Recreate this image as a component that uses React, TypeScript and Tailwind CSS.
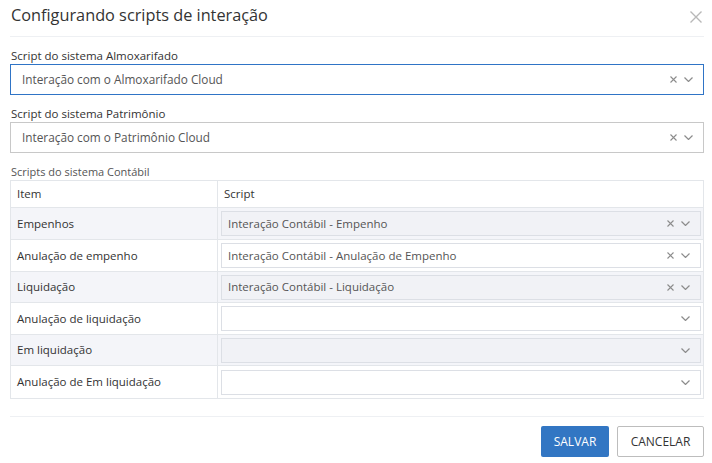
type Row = { item: string; value?: string; striped: boolean; h: string }

const rows: Row[] = [
  { item: 'Empenhos', value: 'Interação Contábil - Empenho', striped: true, h: 'h-[32px]' },
  { item: 'Anulação de empenho', value: 'Interação Contábil - Anulação de Empenho', striped: false, h: 'h-[32px]' },
  { item: 'Liquidação', value: 'Interação Contábil - Liquidação', striped: true, h: 'h-[31px]' },
  { item: 'Anulação de liquidação', striped: false, h: 'h-[32px]' },
  { item: 'Em liquidação', striped: true, h: 'h-[31px]' },
  { item: 'Anulação de Em liquidação', striped: false, h: 'h-[32px]' },
]

function ClearIcon() {
  return (
    <svg className="h-[7px] w-[7px]" viewBox="0 0 7 7" fill="none" stroke="currentColor" strokeWidth={1.1}>
      <path d="M0.5 0.5l6 6M6.5 0.5l-6 6" />
    </svg>
  )
}

function Chevron() {
  return (
    <svg className="h-[5px] w-[9px]" viewBox="0 0 9 5" fill="none" stroke="currentColor" strokeWidth={1.2}>
      <path d="M0.5 0.5l4 4 4-4" />
    </svg>
  )
}

function SelectIcons({ clearable }: { clearable: boolean }) {
  return (
    <span className="flex items-center gap-[7px] text-[#8c8c8c]">
      {clearable && <ClearIcon />}
      <Chevron />
    </span>
  )
}

function MainSelect({ value, focused }: { value: string; focused?: boolean }) {
  return (
    <div
      className={`flex h-[31px] items-center justify-between border bg-white pl-[11px] pr-[10px] ${
        focused ? 'border-[#2f74c6]' : 'border-[#c8c8c8]'
      }`}
    >
      <span className="text-[11.8px] text-[#555]">{value}</span>
      <SelectIcons clearable />
    </div>
  )
}

export default function App() {
  return (
    <div
      className="h-[463px] w-[712px] overflow-hidden bg-white pl-[10px] pr-[8px] text-[#333]"
      style={{ fontFamily: '"Open Sans", "Liberation Sans", sans-serif' }}
    >
      {/* header */}
      <div className="flex h-[37px] items-start justify-between border-b border-[#eef0f3] pl-[1px] pt-[2px]">
        <h1 className="text-[16.3px] leading-[26px] text-[#333]">Configurando scripts de interação</h1>
        <button type="button" className="mr-[2px] mt-[9px] text-[#b8b8b8]" aria-label="Fechar">
          <svg className="h-[12px] w-[12px]" viewBox="0 0 12 12" fill="none" stroke="currentColor" strokeWidth={1.4}>
            <path d="M0.5 0.5l11 11M11.5 0.5l-11 11" />
          </svg>
        </button>
      </div>

      <div className="pt-[10px]">
        <label className="block h-[17px] pl-[1px] text-[11.5px] leading-[17px] text-[#333]">
          Script do sistema Almoxarifado
        </label>
        <MainSelect value="Interação com o Almoxarifado Cloud" focused />
      </div>

      <div className="pt-[10px]">
        <label className="block h-[17px] pl-[1px] text-[11.5px] leading-[17px] text-[#333]">
          Script do sistema Patrimônio
        </label>
        <MainSelect value="Interação com o Patrimônio Cloud" />
      </div>

      <div className="pt-[10px]">
        <label className="block h-[17px] pl-[1px] text-[11px] leading-[17px] text-[#555]">
          Scripts do sistema Contábil
        </label>
        <div className="w-[694px] border border-[#e3e6ea]">
          <div className="flex h-[27px] items-center border-b border-[#e3e6ea] text-[11.5px]">
            <div className="flex h-full w-[207px] items-center border-r border-[#e3e6ea] pl-[6px]">Item</div>
            <div className="pl-[6px]">Script</div>
          </div>
          {rows.map((r, i) => (
            <div
              key={r.item}
              className={`flex ${r.h} items-stretch text-[11.5px] ${
                i < rows.length - 1 ? 'border-b border-[#e3e6ea]' : ''
              } ${r.striped ? 'bg-[#f4f5f9]' : 'bg-white'}`}
            >
              <div className="flex w-[207px] items-center border-r border-[#e3e6ea] pl-[6px]">{r.item}</div>
              <div className="flex flex-1 items-center pl-[3px] pr-[2px]">
                <div
                  className={`flex h-[25px] w-full items-center justify-between border border-[#dcdfe5] pl-[6px] pr-[10px] ${
                    r.striped ? 'bg-[#f1f2f6]' : 'bg-white'
                  }`}
                >
                  <span className="text-[11.5px] text-[#555]">{r.value ?? ''}</span>
                  <SelectIcons clearable={!!r.value} />
                </div>
              </div>
            </div>
          ))}
        </div>
      </div>

      {/* footer */}
      <div className="mt-[17px] flex justify-end gap-[8px] border-t border-[#eef0f3] pt-[9px]">
        <button
          type="button"
          className="h-[31px] w-[68px] rounded-[2px] bg-[#3276c3] text-[12px] text-white"
        >
          SALVAR
        </button>
        <button
          type="button"
          className="h-[31px] w-[87px] rounded-[2px] border border-[#bdbdbd] bg-white text-[12px] text-[#333]"
        >
          CANCELAR
        </button>
      </div>
    </div>
  )
}
